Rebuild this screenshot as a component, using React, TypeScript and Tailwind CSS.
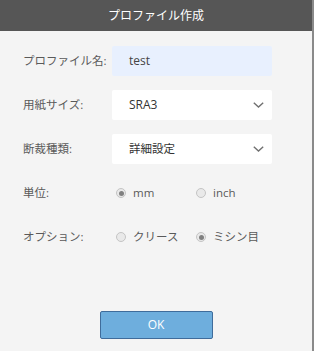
import React from "react";

const font = { fontFamily: '"Open Sans", "Noto Sans CJK JP", sans-serif' };

function Chevron() {
  return (
    <svg width="11" height="6" viewBox="0 0 11 6" className="block">
      <polyline points="0.8,0.8 5.5,5 10.2,0.8" fill="none" stroke="#707070" strokeWidth="1.4" />
    </svg>
  );
}

function Radio({ checked, label }: { checked: boolean; label: string }) {
  return (
    <div className="flex items-center w-[87px]">
      <div className="ml-[4px] w-[10px] h-[10px] rounded-full border border-[#c4c4c4] bg-[#e9e9e9] flex items-center justify-center">
        {checked && <div className="w-[5px] h-[5px] rounded-full bg-[#808080]" />}
      </div>
      <span className="ml-[7px] text-[11.5px] text-[#5a5a5a]">{label}</span>
    </div>
  );
}

function Row({ label, children }: { label: string; children: React.ReactNode }) {
  return (
    <div className="flex items-center h-[30px]">
      <div className="w-[89px] text-[11.5px] text-[#5a5a5a] leading-none">{label}</div>
      <div className="w-[160px] h-[30px] flex items-center">{children}</div>
    </div>
  );
}

export default function App() {
  return (
    <div className="flex w-[314px] h-[351px]" style={font}>
      <div className="flex-1 flex flex-col bg-[#f4f4f4]">
        <div className="h-[31px] bg-[#565656] text-white text-[12px] flex items-center justify-center">
          プロファイル作成
        </div>
        <div className="pt-[15px] pl-[23px] flex flex-col gap-[14px]">
          <Row label="プロファイル名:">
            <div className="w-full h-full rounded-[2px] bg-[#e8f0fe] pl-[17px] flex items-center text-[12px] text-[#444]">
              test
            </div>
          </Row>
          <Row label="用紙サイズ:">
            <div className="w-full h-full rounded-[2px] bg-white pl-[17px] pr-[8px] flex items-center justify-between text-[12px] text-[#333]">
              <span>SRA3</span>
              <Chevron />
            </div>
          </Row>
          <Row label="断裁種類:">
            <div className="w-full h-full rounded-[2px] bg-white pl-[17px] pr-[8px] flex items-center justify-between text-[11.5px] text-[#333]">
              <span>詳細設定</span>
              <Chevron />
            </div>
          </Row>
          <Row label="単位:">
            <Radio checked label="mm" />
            <Radio checked={false} label="inch" />
          </Row>
          <Row label="オプション:">
            <Radio checked={false} label="クリース" />
            <Radio checked label="ミシン目" />
          </Row>
        </div>
        <div className="mt-auto mb-[12px] flex justify-center">
          <button className="w-[113px] h-[28px] rounded-[2px] bg-[#6eaedd] border border-[#3f6c9b] text-white text-[12px]">
            OK
          </button>
        </div>
      </div>
      <div className="w-[2px] bg-[#8a8a8a]" />
    </div>
  );
}
